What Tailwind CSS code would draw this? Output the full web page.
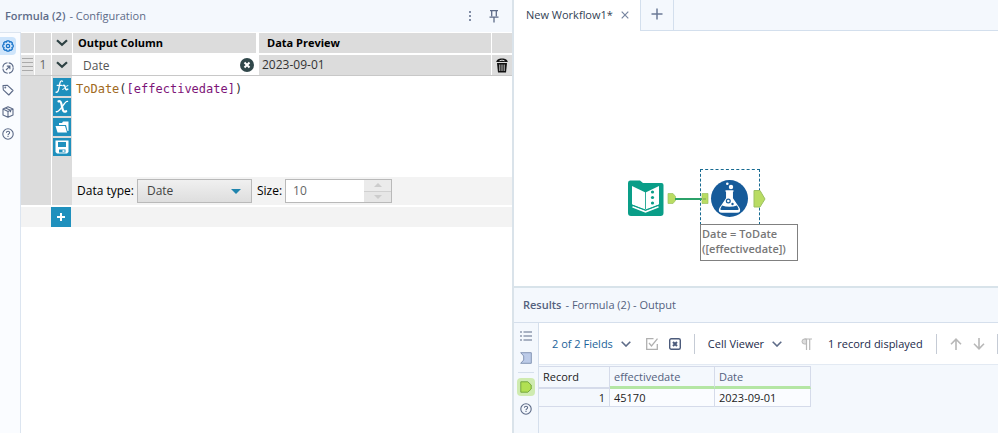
<!DOCTYPE html>
<html lang="en">
<head>
<meta charset="utf-8">
<meta name="viewport" content="width=device-width, initial-scale=1">
<title>Workflow Designer</title>
<script src="https://cdn.jsdelivr.net/npm/@tailwindcss/browser@4"></script>
</head>
<body class="h-screen overflow-hidden bg-white font-['Open_Sans','Noto_Sans',sans-serif] text-[12px] leading-4 text-[#222]">
<div class="grid h-full grid-cols-[514fr_484fr]">

  <!-- Configuration panel -->
  <section class="flex min-w-0 flex-col border-r-2 border-[#dae3ea]">
    <header class="flex h-8 shrink-0 items-center bg-[#f4f8fd] pl-[5px] pr-3 text-[11px] text-[#5d6b88]">
      <h2 class="flex gap-1"><b class="font-semibold">Formula (2)</b> <span>- Configuration</span></h2>
      <button aria-label="More" class="ml-auto mr-3"><svg width="12" height="12" viewBox="0 0 12 12" fill="#5d6b88"><circle cx="6" cy="2" r="1"/><circle cx="6" cy="6" r="1"/><circle cx="6" cy="10" r="1"/></svg></button>
      <button aria-label="Pin"><svg width="12" height="14" viewBox="0 0 12 14" fill="none" stroke="#5d6b88" stroke-width="1.3"><path d="M2 1.7h8M3.7 1.7v5.5M8.3 1.7v5.5M1.5 8.2h9M6 8.2V13.5"/></svg></button>
    </header>
    <div class="flex min-h-0 flex-1">
      <nav class="flex w-[21px] shrink-0 flex-col items-start gap-1 border-r border-t border-[#dce5f0] bg-[#fafcff] pt-1 text-[#5d6b88]">
        <button aria-label="Configuration" class="grid h-[18px] w-4 place-items-center rounded-r-sm bg-[#cfe5fb] text-[#1471c8]"><svg width="12" height="12" viewBox="0 0 12 12" fill="none" stroke="currentColor" stroke-width="1.2"><path d="M5 .8h2l.5 1.3 1.5-.5 1.4 1.4-.5 1.5 1.3.5v2l-1.3.5.5 1.5L9 10.400l-1.500-.500L7 11.200H5l-.500-1.300-1.500.500L1.600 9l.500-1.500L.8 7V5l1.300-.500L1.600 3 3 1.600l1.500.500z" stroke-linejoin="round"/><circle cx="6" cy="6" r="1.700"/></svg></button>
        <button aria-label="Navigation" class="grid h-[18px] w-4 place-items-center"><svg width="12" height="12" viewBox="0 0 12 12" fill="none" stroke="currentColor" stroke-width="1.100"><circle cx="6" cy="6" r="5.200" stroke-dasharray="7 1.200"/><path d="M4 8l3.700-3.700M4.800 4.100h3.100v3.100"/></svg></button>
        <button aria-label="Annotation" class="grid h-[18px] w-4 place-items-center"><svg width="12" height="12" viewBox="0 0 12 12" fill="none" stroke="currentColor" stroke-width="1.100" stroke-linejoin="round"><path d="M1 1.500l4.500-.200L11 6.500 6.800 11 1.300 5.800z"/><circle cx="3.300" cy="3.500" r=".4"/></svg></button>
        <button aria-label="Package" class="grid h-[18px] w-4 place-items-center"><svg width="12" height="12" viewBox="0 0 12 12" fill="none" stroke="currentColor" stroke-width="1.100" stroke-linejoin="round"><path d="M6 .8l5 2.300v5.800l-5 2.400-5-2.400V3.100zM1 3.100l5 2.300 5-2.300M6 5.400v5.900M3.500 2l5 2.300v2"/></svg></button>
        <button aria-label="Help" class="grid h-[18px] w-4 place-items-center"><svg width="12" height="12" viewBox="0 0 12 12" fill="none" stroke="currentColor" stroke-width="1.100"><circle cx="6" cy="6" r="5.200"/><path d="M4.400 4.800c0-2.200 3.300-2.100 3.200-.1C7.600 5.900 6 5.800 6 7.200M6 8v1.100"/></svg></button>
      </nav>

      <div class="min-w-0 flex-1 bg-white pt-px">
        <div class="grid grid-cols-[13px_16px_20px_185px_1fr_20px] gap-x-px">
          <div class="h-5 bg-[#dcdcdc]"></div>
          <div class="bg-[#dcdcdc]"></div>
          <button aria-label="Collapse all" class="grid place-items-center bg-[#dcdcdc]"><svg width="12" height="8" viewBox="0 0 12 8" fill="none" stroke="#2d4143" stroke-width="2.200"><path d="M1 1.200l5 4.600 5-4.600"/></svg></button>
          <div class="mr-0.5 flex items-center bg-[#dcdcdc] pl-[5px] text-[11px] font-bold text-black">Output Column</div>
          <div class="flex items-center bg-[#dcdcdc] pl-2 text-[11px] font-bold text-black">Data Preview</div>
          <div class="bg-[#dcdcdc]"></div>
        </div>
        <div class="mt-0.5 grid grid-cols-[13px_16px_20px_185px_1fr_20px] gap-x-px border-b border-[#c8c8c8]">
          <div class="grid h-5 place-items-center bg-[#e4e4e4]"><svg width="11" height="14" viewBox="0 0 11 14" stroke="#aaa"><path d="M0 .5h11M0 4.500h11M0 8.500h11M0 12.500h11"/></svg></div>
          <div class="flex items-center justify-center bg-[#e4e4e4] text-[#666]">1</div>
          <button aria-label="Collapse" class="grid place-items-center bg-[#dcdcdc]"><svg width="12" height="8" viewBox="0 0 12 8" fill="none" stroke="#2d4143" stroke-width="2.200"><path d="M1 1.200l5 4.600 5-4.600"/></svg></button>
          <div class="mr-0.5 flex items-center bg-white pr-0.5">
            <input aria-label="Output column" value="Date" class="h-full min-w-0 flex-1 pl-[10px] text-[#555] outline-none">
            <button aria-label="Clear"><svg width="14" height="14" viewBox="0 0 14 14"><circle cx="7" cy="7" r="7" fill="#30474a"/><path d="M4.500 4.500l5 5M9.500 4.500l-5 5" stroke="#fff" stroke-width="2"/></svg></button>
          </div>
          <div class="flex items-center bg-[#dcdcdc] pl-[3px] text-[#333]">2023-09-01</div>
          <button aria-label="Delete" class="grid place-items-center bg-[#dcdcdc]"><svg width="12" height="16" viewBox="0 0 12 16"><path d="M.3 5C.3 3.100 2.500 1.500 6 1.500S11.700 3.100 11.700 5z" fill="#111"/><path d="M3.500 3.800Q6 2.500 8.500 3.800" stroke="#ddd" fill="none"/><path d="M1 6h10l-1 9.500H2z" fill="#111"/><path d="M3.800 7.500v6.500M6 7.500v6.500M8.200 7.500v6.500" stroke="#ddd" stroke-width=".9"/></svg></button>
        </div>
        <div class="grid grid-cols-[31px_20px_1fr]">
          <div class="mr-px bg-[#dcdcdc]"></div>
          <div class="flex flex-col gap-0.5 bg-[#dcdcdc] px-px pb-2 pt-0.5">
            <button aria-label="Functions" class="h-[18px] bg-[#1f90bd]"><svg width="18" height="18" viewBox="0 0 18 18" class="block" fill="none" stroke="#fff" stroke-linecap="round"><path d="M9.500 3.200C7.300 2 6.800 5 6.300 8c-.6 4-1.200 6.800-3.300 6.200M4.200 7.300h4.500" stroke-width="1.300"/><path d="M10 7.600c1.500-1 1.800.4 2.300 2.200.5 1.900 1 2.500 2.500 1.400" stroke-width="1.500"/><path d="M14.900 7.500c-1.900-.2-3.200 4-5.200 4" stroke-width="1"/></svg></button>
            <button aria-label="Variables" class="h-[18px] bg-[#1f90bd]"><svg width="18" height="18" viewBox="0 0 18 18" class="block" fill="none" stroke="#fff" stroke-linecap="round"><path d="M5.500 3.400c2.300-.8 2.700 1.200 3.500 5.100.8 4 1.400 6.200 4.200 4.700" stroke-width="2.200"/><path d="M14.500 3.400C11.500 2.300 7.500 14.800 3.300 13.700" stroke-width="1.400"/></svg></button>
            <button aria-label="Open expression" class="h-[18px] bg-[#1f90bd]"><svg width="18" height="18" viewBox="0 0 18 18" class="block"><path d="M6 7V5h3l1-1.500h5.500V13h-1L13 7z" fill="#fff"/><path d="M2.500 8H12l2 6.500H4.500z" fill="#fff"/></svg></button>
            <button aria-label="Save expression" class="h-[18px] bg-[#1f90bd]"><svg width="18" height="18" viewBox="0 0 18 18" class="block"><path d="M2.500 2.500h13v11.500l-1.500 1.500H4L2.500 14z" fill="#fff"/><path d="M5 4h8v5H5zM6 11.500h6.500v3H6z" fill="#1f90bd"/><path d="M9.500 12.200h2v1.700h-2z" fill="#fff"/></svg></button>
          </div>
          <div class="flex min-w-0 flex-col">
            <div contenteditable="true" role="textbox" aria-label="Expression" class="h-[101px] whitespace-nowrap bg-white pl-1 pt-[5px] font-['DejaVu_Sans_Mono',monospace] text-[#333] outline-none"><span class="text-[#a06a22]">ToDate</span>(<span class="text-[#7d1478]">[effectivedate]</span>)</div>
            <div class="flex h-7 items-center bg-[#f3f3f3] pl-[5px] text-black">
              <label for="dtype">Data type:</label>
              <div class="relative ml-[3px]">
                <select id="dtype" class="block h-6 w-[115px] appearance-none border border-[#b9b9b9] bg-linear-to-b from-[#f0f0f0] to-[#dedede] pl-[9px] text-[#444]"><option>Date</option></select>
                <svg class="pointer-events-none absolute right-[11px] top-[10px]" width="10" height="5" viewBox="0 0 10 5" fill="#1f84ad"><path d="M0 0h10L5 5z"/></svg>
              </div>
              <label for="size" class="ml-[5px]">Size:</label>
              <div class="ml-[3px] flex h-6 w-[107px] border border-[#b9b9b9] bg-white">
                <input id="size" value="10" class="min-w-0 flex-1 pl-[7px] text-[#666] outline-none">
                <div class="grid w-[27px] grid-rows-2 gap-px bg-[#d0d0d0]">
                  <button aria-label="Increase" class="grid place-items-center bg-[#ebebeb]"><svg width="8" height="4" viewBox="0 0 8 4" fill="#ccc"><path d="M0 4h8L4 0z"/></svg></button>
                  <button aria-label="Decrease" class="grid place-items-center bg-[#e6e6e6]"><svg width="8" height="4" viewBox="0 0 8 4" fill="#ccc"><path d="M0 0h8L4 4z"/></svg></button>
                </div>
              </div>
            </div>
          </div>
        </div>
        <div class="mt-0.5 h-5 bg-[#f3f3f3] pl-[30px]">
          <button aria-label="Add expression" class="grid h-5 w-5 place-items-center bg-[#1f90bd]"><svg width="8" height="8" viewBox="0 0 8 8" stroke="#fff" stroke-width="2"><path d="M4 0v8M0 4h8"/></svg></button>
        </div>
      </div>
    </div>
  </section>

  <!-- Canvas and results -->
  <div class="flex min-w-0 flex-col">
    <div class="flex h-[31px] shrink-0 bg-[#f4f8fd]">
      <div class="flex w-[127px] items-center border-r border-[#d3dfed] bg-white pb-0.5 pl-3 text-[11px] text-[#333f55]">New Workflow1*
        <button aria-label="Close tab" class="ml-2"><svg width="8" height="8" viewBox="0 0 8 8" stroke="#7785a0" stroke-width="1.200"><path d="M.7.7l6.600 6.600M7.300.7L.7 7.300"/></svg></button>
      </div>
      <button aria-label="New workflow" class="grid w-[33px] place-items-center border-b border-r border-[#d3dfed] pb-0.5"><svg width="12" height="12" viewBox="0 0 12 12" stroke="#6b7a96" stroke-width="1.500"><path d="M6 .5v11M.5 6h11"/></svg></button>
      <div class="flex-1 border-b border-[#d3dfed]"></div>
    </div>

    <main class="relative min-h-0 flex-1 bg-white">
      <svg class="absolute left-[112px] top-[147px]" width="40" height="40" viewBox="0 0 40 40"><path d="M2 5q0-2.500 2-2.500h10l3 2.500h18.500q2 0 2 2v28q0 3-3 3H5q-3 0-3-3z" fill="#0a9e88"/><path d="M6 8l13.500 6.500V32L6 26.500z" fill="#fff"/><path d="M19.500 14.500L33 8v18.500L19.500 32z" fill="#fff"/><path d="M19.500 14v17" stroke="#0a9e88" stroke-width=".8"/><path d="M6.500 28.800l13 5 13-5" stroke="#fff" stroke-width="1.600" fill="none"/><path d="M6 27l13.500 5L33 27" stroke="#0a9e88" fill="none"/><g fill="#0a9e88"><circle cx="26.500" cy="14" r="1.600"/><circle cx="26.500" cy="19.500" r="1.600"/><circle cx="26.500" cy="25" r="1.600"/></g></svg>
      <div class="absolute left-[186px] top-[138px] h-[56px] w-[60px] border border-b-0 border-dashed border-[#176a91]"></div>
      <svg class="absolute left-[152px] top-[146px]" width="100" height="40" viewBox="0 0 100 40"><path d="M2 16.500h5l2.500 3v4l-2.500 3H2z" fill="#b9dc63" stroke="#9cc162" stroke-width=".7"/><path d="M9 22h28" stroke="#2ba169" stroke-width="2"/><path d="M36 16.500h6v10h-6z" fill="#b9dc63" stroke="#9cc162" stroke-width=".7"/><path d="M37 22h3" stroke="#7da05c"/><circle cx="63.500" cy="21.500" r="18.500" fill="#165b9a"/><path d="M59.500 14h8M60.800 14v7.500L54 31.500q-1.500 3.500 2 3.500h15q3.500 0 2-3.500l-6.800-10V14z" fill="#fff" stroke="#fff" stroke-width="1.500" stroke-linejoin="round"/><path d="M56 28.500q3.500 1.300 7.500 1.300t7.500-1.300l1.500 3q.5 1.500-1 1.500h-16q-1.500 0-1-1.500z" fill="#165b9a"/><circle cx="62.300" cy="24" r="1.900" fill="#fff" stroke="#165b9a" stroke-width="1.200"/><circle cx="66.500" cy="27" r="1.200" fill="#165b9a"/><circle cx="65" cy="10" r="2.200" fill="#fff"/><circle cx="61.300" cy="6.700" r="1.300" fill="#fff"/><path d="M88 13.500h6l5 8.500-5 8h-6z" fill="#b9dc63" stroke="#9cc162"/></svg>
      <div class="absolute left-[186px] top-[193px] w-[98px] border border-[#808080] bg-white pb-1 pl-px pt-px text-[11px] font-semibold leading-[15px] text-[#777]">Date = ToDate<br>([effectivedate])</div>
    </main>

    <section class="flex h-[147px] shrink-0 flex-col border-t-2 border-[#d8e3ea] bg-[#f4f8fd]">
      <header class="flex h-[35px] items-center border-b border-[#d5dfec] pl-[9px] text-[11px] text-[#53617e]"><h2 class="flex gap-1"><b class="font-semibold">Results</b> <span>- Formula (2) - Output</span></h2></header>
      <div class="flex min-h-0 flex-1">
        <nav class="flex w-[25px] shrink-0 flex-col items-center border-r border-[#d5dfec] pt-1 text-[#5d6b88]">
          <button aria-label="Messages" class="grid h-[18px] w-4 place-items-center"><svg width="12" height="10" viewBox="0 0 12 10" stroke="currentColor" stroke-width="1.200"><path d="M0 1h2M3.500 1H12M0 5h2M3.500 5H12M0 9h2M3.500 9H12"/></svg></button>
          <button aria-label="Input anchor" class="mt-1 grid h-[18px] w-4 place-items-center"><svg width="12" height="12" viewBox="0 0 12 12"><path d="M.7.700h10.600v10.600H.700L3.700 8V4z" fill="#bccbe8" stroke="#8495b5"/></svg></button>
          <hr class="my-[5px] w-4 border-[#d5dfec]">
          <button aria-label="Output anchor" class="grid h-[18px] w-[18px] place-items-center rounded-sm bg-[#cfebb0]"><svg width="12" height="12" viewBox="0 0 12 12"><path d="M.8.800h7L11.200 4v4l-3.400 3.200h-7z" fill="#b1e052" stroke="#76a83f"/></svg></button>
          <button aria-label="Results help" class="mt-1 grid h-[18px] w-4 place-items-center"><svg width="12" height="12" viewBox="0 0 12 12" fill="none" stroke="currentColor" stroke-width="1.100"><circle cx="6" cy="6" r="5.200"/><path d="M4.400 4.800c0-2.200 3.300-2.100 3.200-.1C7.600 5.900 6 5.800 6 7.200M6 8v1.100"/></svg></button>
        </nav>
        <div class="min-w-0 flex-1">
          <div class="flex h-[42px] items-center overflow-hidden whitespace-nowrap border-b border-[#e3eaf3] bg-white pl-[13px] text-[11px] text-[#1b2a4a]">
            <button class="flex shrink-0 items-center gap-2 text-[#1a6299]">2 of 2 Fields <svg width="10" height="6" viewBox="0 0 10 6" fill="none" stroke="#5d6b88" stroke-width="1.600"><path d="M.7.700L5 5 9.300.700"/></svg></button>
            <button aria-label="Select all" class="ml-[15px] shrink-0"><svg width="12" height="12" viewBox="0 0 12 12" fill="none" stroke="#b0b0b0" stroke-width="1.300"><path d="M7.500.700H.700v10.600h10.600V6M3 5l2.500 3L11.500.700"/></svg></button>
            <button aria-label="Clear selection" class="ml-[11px] shrink-0"><svg width="12" height="12" viewBox="0 0 12 12" fill="none" stroke="#4c5b7b"><rect x=".7" y=".7" width="10.600" height="10.600" rx="1.500" stroke-width="1.400"/><path d="M4 4l4 4M8 4L4 8" stroke-width="2"/></svg></button>
            <div class="ml-[13px] h-5 w-px shrink-0 bg-[#c5cbd5]"></div>
            <button class="ml-[13px] flex shrink-0 items-center gap-2">Cell Viewer <svg width="10" height="6" viewBox="0 0 10 6" fill="none" stroke="#5d6b88" stroke-width="1.600"><path d="M.7.700L5 5 9.300.700"/></svg></button>
            <button aria-label="Show whitespace" class="ml-[19px] shrink-0"><svg width="11" height="12" viewBox="0 0 11 12"><path d="M5.500 1h-2a2.500 2.500 0 000 5h2z" fill="#ddd" stroke="#b8b8b8"/><path d="M3.500 1H11M5.500 1v11M8.700 1v11" stroke="#b8b8b8" fill="none" stroke-width="1.200"/></svg></button>
            <span class="ml-4 shrink-0">1 record displayed</span>
            <div class="ml-auto h-5 w-px shrink-0 bg-[#c5cbd5]"></div>
            <button aria-label="Previous" class="ml-[13px] shrink-0"><svg width="12" height="12" viewBox="0 0 12 12" fill="none" stroke="#b8b8b8" stroke-width="1.600"><path d="M6 12V1.500M1 6.200l5-5 5 5"/></svg></button>
            <button aria-label="Next" class="ml-[11px] shrink-0"><svg width="12" height="12" viewBox="0 0 12 12" fill="none" stroke="#b8b8b8" stroke-width="1.600"><path d="M6 0v10.500M1 5.800l5 5 5-5"/></svg></button>
            <div class="ml-3 h-5 w-px shrink-0 bg-[#c5cbd5]"></div>
          </div>
          <table class="mt-px border-separate border-spacing-0 text-[11px] text-[#222]">
            <thead>
              <tr class="h-[23px] text-left">
                <th class="w-[71px] border-b-2 border-r border-t border-[#d5dbea] px-1 font-normal">Record</th>
                <th class="w-[105px] border-b-[3px] border-r border-t border-[#d5dbea] border-b-[#b4e6a4] px-1 font-normal text-[#53617e]">effectivedate</th>
                <th class="w-[96px] border-b-[3px] border-r border-t border-[#d5dbea] border-b-[#b4e6a4] px-1 font-normal text-[#53617e]">Date</th>
              </tr>
            </thead>
            <tbody>
              <tr class="h-[18px]">
                <td class="border-b border-r border-[#d5dbea] px-1 text-right">1</td>
                <td class="border-b border-r border-[#d5dbea] bg-[#fafcff] px-1">45170</td>
                <td class="border-b border-r border-[#d5dbea] bg-[#fafcff] px-1">2023-09-01</td>
              </tr>
            </tbody>
          </table>
        </div>
      </div>
    </section>
  </div>
</div>
</body>
</html>
